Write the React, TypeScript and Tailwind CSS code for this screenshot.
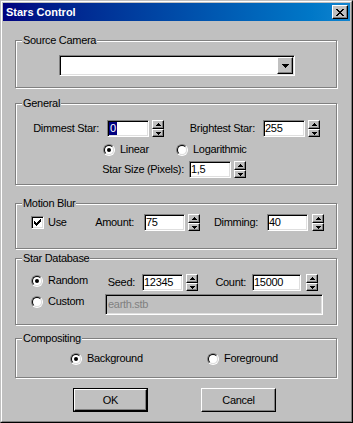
import React from 'react';

const raised =
  'border border-t-white border-l-white border-r-black border-b-black shadow-[inset_-1px_-1px_0_#808080]';
const sunken =
  'border border-t-[#808080] border-l-[#808080] border-r-white border-b-white shadow-[inset_1px_1px_0_#000,inset_-1px_-1px_0_#dfdfdf]';

function Arrow({ up }: { up?: boolean }) {
  return (
    <svg width="5" height="3" viewBox="0 0 5 3" shapeRendering="crispEdges">
      <path d={up ? 'M2 0h1v1h1v1h1v1H0V2h1V1h1z' : 'M0 0h5v1H4v1H3v1H2V2H1V1H0z'} fill="#000" />
    </svg>
  );
}

function Spinner({ className }: { className: string }) {
  return (
    <div className={`flex h-[17px] w-[12px] flex-col ${className}`}>
      <div className={`flex h-[9px] items-center justify-center ${raised}`}>
        <Arrow up />
      </div>
      <div className={`flex h-[8px] items-center justify-center ${raised}`}>
        <Arrow />
      </div>
    </div>
  );
}

function Field({ value, className, selected }: { value: string; className: string; selected?: boolean }) {
  return (
    <div className={`flex h-[17px] items-center bg-white pl-[1px] ${sunken} ${className}`}>
      {selected ? (
        <span className="bg-[#000080] px-[1px] leading-[13px] text-white">{value}</span>
      ) : (
        <span className="leading-[13px]">{value}</span>
      )}
    </div>
  );
}

function Label({ text, className }: { text: string; className: string }) {
  return <div className={`flex justify-end whitespace-nowrap leading-[13px] ${className}`}>{text}</div>;
}

function Radio({ checked, label, className }: { checked?: boolean; label: string; className?: string }) {
  return (
    <div className={`flex items-center ${className ?? ''}`}>
      <div className="flex h-[12px] w-[12px] shrink-0 items-center justify-center rounded-full border border-t-[#808080] border-l-[#808080] border-r-white border-b-white">
        <div className="flex h-[10px] w-[10px] items-center justify-center rounded-full border border-t-black border-l-black border-r-[#dfdfdf] border-b-[#dfdfdf] bg-white">
          {checked && <div className="h-[4px] w-[4px] rounded-full bg-black" />}
        </div>
      </div>
      <span className="ml-[5px] whitespace-nowrap leading-[13px]">{label}</span>
    </div>
  );
}

function Group({ title, className, children }: { title: string; className: string; children?: React.ReactNode }) {
  return (
    <div
      className={`relative ml-[12px] w-[322px] border border-[#808080] shadow-[1px_1px_0_#fff,inset_1px_1px_0_#fff] ${className}`}
    >
      <span className="absolute -top-[7px] left-[6px] h-[13px] bg-[#c0c0c0] px-[1px] leading-[13px]">{title}</span>
      {children}
    </div>
  );
}

export default function App() {
  return (
    <div className="h-[423px] w-[353px] border border-t-[#c0c0c0] border-l-[#c0c0c0] border-r-black border-b-black bg-[#c0c0c0] font-['Liberation_Sans',Arial,sans-serif] text-[11px] tracking-[-0.3px] text-black">
      <div className="flex h-full flex-col border border-t-white border-l-white border-r-[#808080] border-b-[#808080] p-[1px]">
        {/* title bar */}
        <div className="flex h-[18px] shrink-0 items-center justify-between bg-gradient-to-r from-[#000080] to-[#1084d0] pl-[3px] pr-[2px]">
          <span className="text-[11px] font-bold tracking-[0px] text-white">Stars Control</span>
          <div className={`flex h-[14px] w-[16px] items-center justify-center bg-[#c0c0c0] ${raised}`}>
            <svg width="8" height="7" viewBox="0 0 8 7" shapeRendering="crispEdges">
              <path
                d="M0 0h2v1H0zM6 0h2v1H6zM1 1h2v1H1zM5 1h2v1H5zM2 2h4v1H2zM3 3h2v1H3zM2 4h4v1H2zM1 5h2v1H1zM5 5h2v1H5zM0 6h2v1H0zM6 6h2v1H6z"
                fill="#000"
              />
            </svg>
          </div>
        </div>

        {/* Source Camera */}
        <Group title="Source Camera" className="mt-[19px] h-[48px] pl-[43px] pt-[14px]">
          <div className={`flex h-[21px] w-[236px] items-center justify-end bg-white pr-[1px] ${sunken}`}>
            <div className={`flex h-[17px] w-[16px] items-center justify-center bg-[#c0c0c0] ${raised}`}>
              <svg width="7" height="4" viewBox="0 0 7 4" shapeRendering="crispEdges">
                <path d="M0 0h7v1H6v1H5v1H4v1H3V3H2V2H1V1H0z" fill="#000" />
              </svg>
            </div>
          </div>
        </Group>

        {/* General */}
        <Group title="General" className="mt-[15px] h-[82px]">
          <div className="mt-[16px] flex h-[17px] items-center">
            <Label text="Dimmest Star:" className="w-[83px]" />
            <Field value="0" selected className="ml-[8px] w-[42px]" />
            <Spinner className="ml-[3px]" />
            <Label text="Brightest Star:" className="w-[91px]" />
            <Field value="255" className="ml-[8px] w-[42px]" />
            <Spinner className="ml-[3px]" />
          </div>
          <div className="mt-[6px] flex h-[13px] items-center pl-[87px]">
            <Radio checked label="Linear" className="w-[73px]" />
            <Radio label="Logarithmic" />
          </div>
          <div className="mt-[5px] flex h-[17px] items-center">
            <Label text="Star Size (Pixels):" className="w-[168px]" />
            <Field value="1,5" className="ml-[5px] w-[42px]" />
            <Spinner className="ml-[3px]" />
          </div>
        </Group>

        {/* Motion Blur */}
        <Group title="Motion Blur" className="mt-[18px] h-[46px]">
          <div className="mt-[10px] flex h-[17px] items-center pl-[15px]">
            <div className="flex w-[60px] items-center">
              <div className={`flex h-[13px] w-[13px] items-center justify-center bg-white ${sunken}`}>
                <svg width="7" height="7" viewBox="0 0 7 7" shapeRendering="crispEdges">
                  <path
                    d="M6 0h1v3H6v1H5v1H4v1H3v1H2V6H1V5H0V2h1v1h1v1h1V3h1V2h1V1h1z"
                    fill="#000"
                  />
                </svg>
              </div>
              <span className="ml-[4px] leading-[13px]">Use</span>
            </div>
            <Label text="Amount:" className="w-[43px]" />
            <Field value="75" className="ml-[10px] w-[41px]" />
            <Spinner className="ml-[3px]" />
            <Label text="Dimming:" className="w-[58px]" />
            <Field value="40" className="ml-[9px] w-[41px]" />
            <Spinner className="ml-[4px]" />
          </div>
        </Group>

        {/* Star Database */}
        <Group title="Star Database" className="mt-[9px] h-[67px]">
          <div className="mt-[15px] flex h-[17px] items-center pl-[15px]">
            <Radio checked label="Random" className="w-[78px] -translate-y-[2px]" />
            <Label text="Seed:" className="w-[26px]" />
            <Field value="12345" className="ml-[7px] w-[41px]" />
            <Spinner className="ml-[3px]" />
            <Label text="Count:" className="w-[48px]" />
            <Field value="15000" className="ml-[6px] w-[49px]" />
            <Spinner className="ml-[5px]" />
          </div>
          <div className="mt-[3px] flex items-start pl-[15px]">
            <Radio label="Custom" className="mt-[1px] w-[74px]" />
            <div className={`flex h-[21px] w-[218px] items-center pl-[2px] text-[#808080] ${sunken}`}>earth.stb</div>
          </div>
        </Group>

        {/* Compositing */}
        <Group title="Compositing" className="mt-[13px] h-[40px]">
          <div className="mt-[13px] flex h-[13px] items-center pl-[54px]">
            <Radio checked label="Background" className="w-[137px]" />
            <Radio label="Foreground" />
          </div>
        </Group>

        {/* buttons */}
        <div className="mt-[10px] flex">
          <div className="ml-[70px] h-[24px] w-[75px] border border-black">
            <div className={`flex h-full items-center justify-center ${raised}`}>OK</div>
          </div>
          <div className={`ml-[53px] flex h-[24px] w-[75px] items-center justify-center ${raised}`}>Cancel</div>
        </div>
      </div>
    </div>
  );
}
